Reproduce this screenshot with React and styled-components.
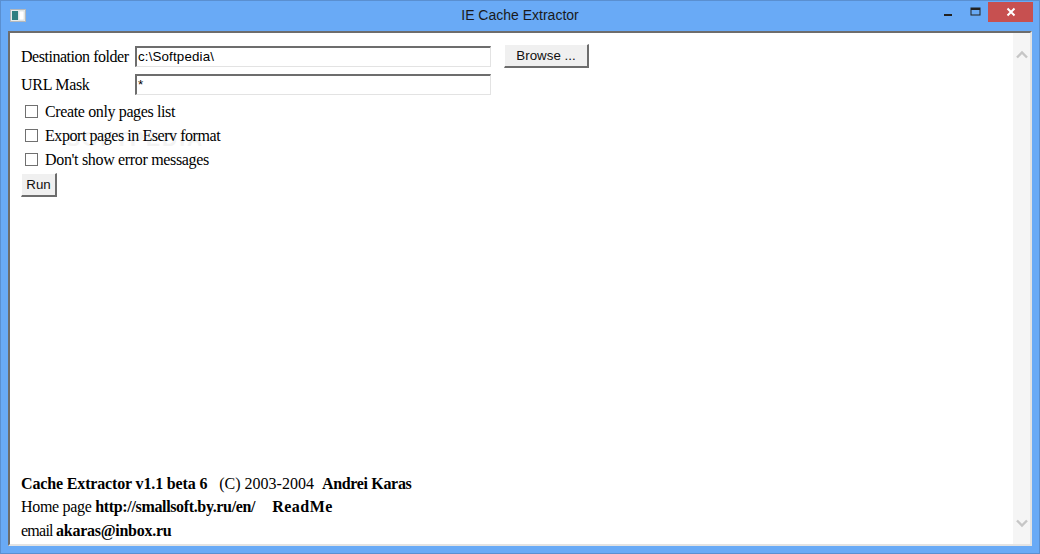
import React from "react";
import styled, { createGlobalStyle } from "styled-components";

const GlobalStyle = createGlobalStyle`
  html, body {
    margin: 0;
    padding: 0;
    background: #69aaf6;
  }
`;

const WindowFrame = styled.div`
  width: 1040px;
  height: 554px;
  box-sizing: border-box;
  display: flex;
  flex-direction: column;
  background: #69aaf6;
  border: 1px solid #5a8fd0;
  padding: 0 7px 7px;
  overflow: hidden;
`;

const TitleBar = styled.div`
  height: 30px;
  flex: none;
  display: flex;
  align-items: center;
  position: relative;
`;

const AppIcon = styled.svg`
  width: 16px;
  height: 13px;
  margin: -1px 0 0 2px;
`;

const TitleText = styled.div`
  position: absolute;
  left: 0;
  right: 0;
  top: 4px;
  text-align: center;
  font: 14px/20px "Liberation Sans", Arial, sans-serif;
  color: #1a1a1a;
`;

const WindowButtons = styled.div`
  position: absolute;
  top: 0;
  right: -1px;
  display: flex;
  align-items: flex-start;
`;

const WindowButton = styled.div`
  width: ${(p) => p.$w}px;
  height: 20px;
  margin-top: 1px;
  display: flex;
  align-items: center;
  justify-content: center;
  background: ${(p) => p.$bg || "transparent"};
`;

const Client = styled.div`
  flex: 1;
  display: flex;
  background: #fff;
  border-top: 2px solid #6d6d6d;
  border-left: 2px solid #6d6d6d;
  border-right: 2px solid #e3e3e3;
  border-bottom: 2px solid #e3e3e3;
  min-height: 0;
`;

const Content = styled.div`
  flex: 1;
  position: relative;
  display: flex;
  flex-direction: column;
  padding: 11px 0 2px 11px;
  font: 16px/24px "Liberation Serif", "Times New Roman", serif;
  color: #000;
`;

const FieldRow = styled.div`
  display: flex;
  align-items: center;
  height: 24px;
  margin-bottom: 4px;
`;

const FieldLabel = styled.div`
  width: 114px;
  flex: none;
  white-space: nowrap;
  letter-spacing: ${(p) => p.$track}px;
  position: relative;
  top: 1px;
`;

const TextInput = styled.div`
  width: 356px;
  height: 21px;
  box-sizing: border-box;
  border-top: 2px solid #6d6d6d;
  border-left: 2px solid #6d6d6d;
  border-right: 1px solid #e3e3e3;
  border-bottom: 1px solid #e3e3e3;
  padding-left: 1px;
  font: 13.33px/18px "Liberation Sans", Arial, sans-serif;
  letter-spacing: 0.15px;
`;

const PushButton = styled.div`
  width: 85px;
  height: 24px;
  margin-left: 13px;
  margin-top: -1px;
  box-sizing: border-box;
  background: #f0f0f0;
  border-top: 1px solid #fff;
  border-left: 1px solid #fff;
  border-right: 2px solid #6d6d6d;
  border-bottom: 2px solid #6d6d6d;
  text-align: center;
  font: 13.33px/22px "Liberation Sans", Arial, sans-serif;
  color: #111;
`;

const RunButton = styled(PushButton)`
  width: 36px;
  margin: 1px 0 0;
`;

const CheckRow = styled.label`
  display: flex;
  align-items: center;
  height: 24px;
  padding-left: 4px;
  letter-spacing: ${(p) => p.$track}px;
`;

const CheckBox = styled.span`
  width: 13px;
  height: 13px;
  box-sizing: border-box;
  flex: none;
  border: 1px solid #707070;
  background: #fff;
  margin: -1px 7px 0 0;
`;

const Watermark = styled.div`
  position: absolute;
  left: 56px;
  top: 94px;
  font: bold 21px/24px "Liberation Sans", Arial, sans-serif;
  letter-spacing: 2px;
  color: #f3f3f3;
  z-index: 0;
`;

const Foreground = styled.div`
  position: relative;
  z-index: 1;
`;

const Footer = styled.div`
  margin-top: auto;
  position: relative;
`;

const FooterLine = styled.div`
  height: 23.5px;
  line-height: 23.5px;
  white-space: pre;
`;

const FooterText = styled.span`
  font-weight: ${(p) => (p.$bold ? "bold" : "normal")};
  letter-spacing: ${(p) => p.$track || 0}px;
`;

const ScrollBar = styled.div`
  width: 17px;
  flex: none;
  background: #f5f5f5;
  display: flex;
  flex-direction: column;
  justify-content: space-between;
  align-items: center;
  padding: 17px 0 16px;
`;

const Chevron = ({ down }) => (
  <svg width="12" height="10" viewBox="0 0 12 10">
    <path
      d={down ? "M1 2.5 L6 7.5 L11 2.5" : "M1 7.5 L6 2.5 L11 7.5"}
      fill="none"
      stroke="#c6c6c6"
      strokeWidth="2.4"
    />
  </svg>
);

export default function App() {
  return (
    <>
      <GlobalStyle />
      <WindowFrame>
        <TitleBar>
          <AppIcon viewBox="0 0 16 13">
            <rect x="0.5" y="0.5" width="15" height="12" fill="#e8ecec" stroke="#b4b8bc" />
            <rect x="2" y="2" width="6" height="9" fill="#2f7f80" />
            <rect x="9" y="2" width="5" height="9" fill="#fff" stroke="#c8d0d0" strokeWidth="0.5" />
          </AppIcon>
          <TitleText>IE Cache Extractor</TitleText>
          <WindowButtons>
            <WindowButton $w={28}>
              <svg width="10" height="10" viewBox="0 0 10 10">
                <rect x="1" y="7" width="8" height="2" fill="#222" />
              </svg>
            </WindowButton>
            <WindowButton $w={26}>
              <svg width="11" height="10" viewBox="0 0 11 10">
                <rect x="1" y="1" width="9" height="7" fill="none" stroke="#222" strokeWidth="1" />
                <rect x="1" y="1" width="9" height="2" fill="#222" />
              </svg>
            </WindowButton>
            <WindowButton $w={45} $bg="#c75050">
              <svg width="10" height="10" viewBox="0 0 10 10">
                <path d="M1.5 1.5 L8.5 8.5 M8.5 1.5 L1.5 8.5" stroke="#fff" strokeWidth="2" />
              </svg>
            </WindowButton>
          </WindowButtons>
        </TitleBar>
        <Client>
          <Content>
            <Watermark>SOFTPEDIA</Watermark>
            <Foreground>
              <FieldRow>
                <FieldLabel $track={-0.47}>Destination folder</FieldLabel>
                <TextInput>c:\Softpedia\</TextInput>
                <PushButton>Browse ...</PushButton>
              </FieldRow>
              <FieldRow>
                <FieldLabel $track={-0.3}>URL Mask</FieldLabel>
                <TextInput>*</TextInput>
              </FieldRow>
              <CheckRow $track={-0.37}>
                <CheckBox />
                Create only pages list
              </CheckRow>
              <CheckRow $track={-0.44}>
                <CheckBox />
                Export pages in Eserv format
              </CheckRow>
              <CheckRow $track={-0.33}>
                <CheckBox />
                Don't show error messages
              </CheckRow>
              <RunButton>Run</RunButton>
            </Foreground>
            <Footer>
              <FooterLine>
                <FooterText $bold $track={-0.15}>Cache Extractor v1.1 beta 6</FooterText>
                {"   (C) 2003-2004  "}
                <FooterText $bold $track={-0.33}>Andrei Karas</FooterText>
              </FooterLine>
              <FooterLine>
                <FooterText $track={-0.3}>Home page </FooterText>
                <FooterText $bold $track={-0.35}>http://smallsoft.by.ru/en/</FooterText>
                <FooterText $track={-0.6}>{"     "}</FooterText>
                <FooterText $bold $track={0.5}>ReadMe</FooterText>
              </FooterLine>
              <FooterLine>
                <FooterText $track={-0.75}>email </FooterText>
                <FooterText $bold $track={-0.27}>akaras@inbox.ru</FooterText>
              </FooterLine>
            </Footer>
          </Content>
          <ScrollBar>
            <Chevron />
            <Chevron down />
          </ScrollBar>
        </Client>
      </WindowFrame>
    </>
  );
}
